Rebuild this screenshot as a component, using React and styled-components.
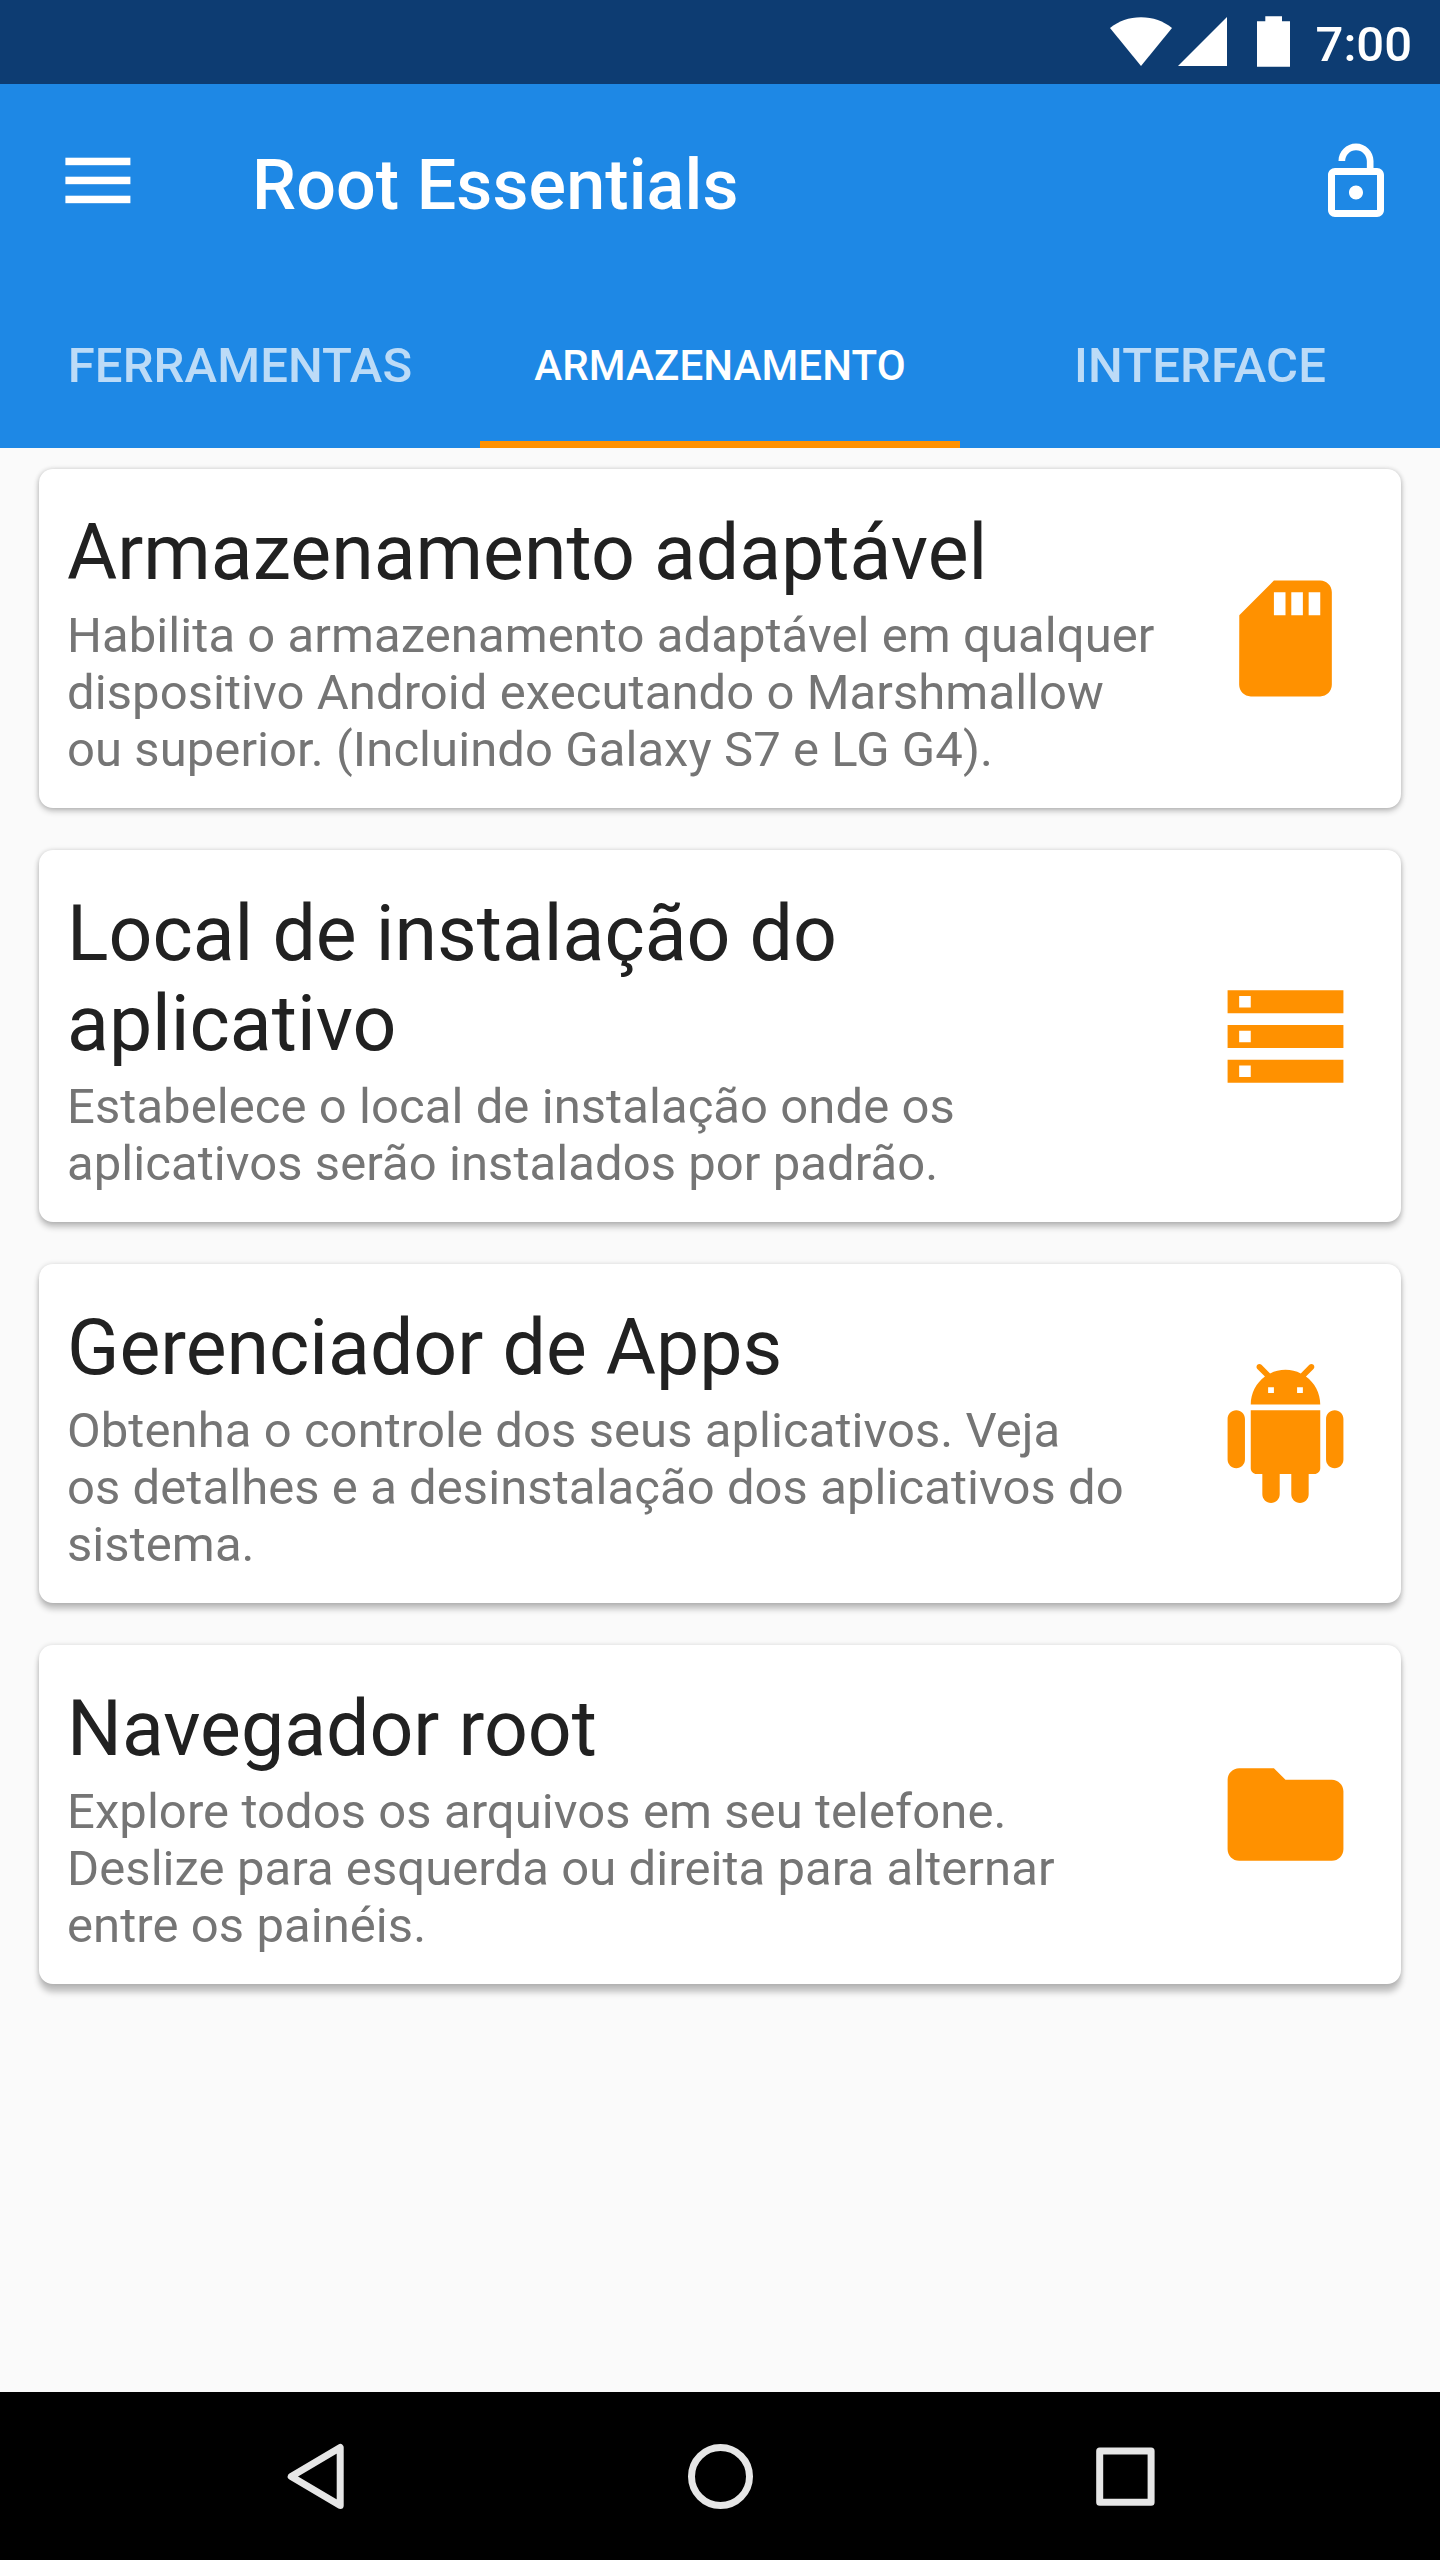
import styled, { createGlobalStyle } from "styled-components";

const cards = [
    {
        title: "Armazenamento adaptável",
        text: "Habilita o armazenamento adaptável em qualquer\ndispositivo Android executando o Marshmallow\nou superior. (Incluindo Galaxy S7 e LG G4).",
        icon: "M18 2h-8L4.02 8 4 20c0 1.1.9 2 2 2h12c1.1 0 2-.9 2-2V4c0-1.1-.9-2-2-2zm-6 6h-2V4h2v4zm3 0h-2V4h2v4zm3 0h-2V4h2v4z",
    },
    {
        title: "Local de instalação do\naplicativo",
        text: "Estabelece o local de instalação onde os\naplicativos serão instalados por padrão.",
        icon: "M2 20h20v-4H2v4zm2-3h2v2H4v-2zM2 4v4h20V4H2zm4 3H4V5h2v2zm-4 7h20v-4H2v4zm2-3h2v2H4v-2z",
    },
    {
        title: "Gerenciador de Apps",
        text: "Obtenha o controle dos seus aplicativos. Veja\nos detalhes e a desinstalação dos aplicativos do\nsistema.",
        icon: "M6 18c0 .55.45 1 1 1h1v3.5c0 .83.67 1.5 1.5 1.5s1.5-.67 1.5-1.5V19h2v3.5c0 .83.67 1.5 1.5 1.5s1.5-.67 1.5-1.5V19h1c.55 0 1-.45 1-1V8H6v10zM3.5 8C2.67 8 2 8.67 2 9.5v7c0 .83.67 1.5 1.5 1.5S5 17.33 5 16.5v-7C5 8.67 4.33 8 3.5 8zm17 0c-.83 0-1.5.67-1.5 1.5v7c0 .83.67 1.5 1.5 1.5s1.5-.67 1.5-1.5v-7c0-.83-.67-1.5-1.5-1.5zm-4.97-5.84l1.3-1.3c.2-.2.2-.51 0-.71-.2-.2-.51-.2-.71 0l-1.48 1.48C13.85 1.23 12.95 1 12 1c-.96 0-1.86.23-2.66.63L7.85.15c-.2-.2-.51-.2-.71 0-.2.2-.2.51 0 .71l1.31 1.31C6.97 3.26 6 5.01 6 7h12c0-1.99-.97-3.75-2.47-4.84zM10 5H9V4h1v1zm5 0h-1V4h1v1z",
    },
    {
        title: "Navegador root",
        text: "Explore todos os arquivos em seu telefone.\nDeslize para esquerda ou direita para alternar\nentre os painéis.",
        icon: "M10 4H4c-1.1 0-1.99.9-1.99 2L2 18c0 1.1.9 2 2 2h16c1.1 0 2-.9 2-2V8c0-1.1-.9-2-2-2h-8l-2-2z",
    },
];

const tabs = ["Ferramentas", "Armazenamento", "Interface"];
const activeTab = "Armazenamento";

const App = () => (
    <Screen>
        <GlobalStyle />
        <StatusBar>
            <svg width="180" height="52" viewBox="0 0 180 52" fill="#fff">
                <path d="M0 12C8.5 5 19 1.2 31 1.2S53.5 5 62 12L31 50z" />
                <path d="M117 1v49H68z" />
                <path d="M155.300 0.200h16.700v5h8v45.600h-33V5.200h8.300z" />
            </svg>
            <Clock>7:00</Clock>
        </StatusBar>

        <Header>
            <Toolbar>
                <svg width="66" height="50" viewBox="0 0 66 50" fill="#fff">
                    <rect x="0.400" y="0.700" width="65" height="7.500" />
                    <rect x="0.400" y="19.700" width="65" height="7.500" />
                    <rect x="0.400" y="38.700" width="65" height="7.500" />
                </svg>
                <AppName>Root Essentials</AppName>
                <svg width="84" height="84" viewBox="0 0 24 24" fill="#fff">
                    <path d="M12 17c1.100 0 2-.9 2-2s-.9-2-2-2-2 .9-2 2 .9 2 2 2zm6-9h-1V6c0-2.760-2.240-5-5-5S7 3.240 7 6h1.900c0-1.710 1.390-3.100 3.100-3.100s3.100 1.390 3.100 3.100v2H6c-1.100 0-2 .9-2 2v10c0 1.100.9 2 2 2h12c1.100 0 2-.9 2-2V10c0-1.100-.9-2-2-2zm0 12H6V10h12v10z" />
                </svg>
            </Toolbar>
            <Tabs>
                {tabs.map((tab) => (
                    <Tab key={tab} $active={tab === activeTab}>
                        {tab}
                    </Tab>
                ))}
            </Tabs>
        </Header>

        <CardList>
            {cards.map(({ title, text, icon }, i) => (
                <Card key={title} $row={i}>
                    <div>
                        <CardTitle>{title}</CardTitle>
                        <CardText>{text}</CardText>
                    </div>
                    <CardIcon viewBox="0 0 24 24">
                        <path d={icon} />
                    </CardIcon>
                </Card>
            ))}
        </CardList>

        <NavBar>
            <NavIcon viewBox="0 0 72 72">
                <path d="M61.200 7.500v58L12.200 36.500z" />
            </NavIcon>
            <NavIcon viewBox="0 0 72 72">
                <circle cx="36.500" cy="36.500" r="29" />
            </NavIcon>
            <NavIcon viewBox="0 0 72 72">
                <rect x="10.700" y="10.900" width="51.400" height="51.400" />
            </NavIcon>
        </NavBar>
    </Screen>
);

const GlobalStyle = createGlobalStyle`
    * {
        box-sizing: border-box;
    }
    body {
        margin: 0;
        font-family: Roboto, sans-serif;
    }
    svg {
        display: block;
        flex-shrink: 0;
    }
    h1, h2, p {
        margin: 0;
    }
`;

const Screen = styled.div`
    width: 1440px;
    height: 2560px;
    display: flex;
    flex-direction: column;
    background: #fafafa;
    overflow: hidden;
`;

const StatusBar = styled.div`
    height: 84px;
    display: flex;
    justify-content: flex-end;
    align-items: center;
    gap: 26px;
    padding-right: 28px;
    background: #0d3c72;
`;

const Clock = styled.span`
    color: #fff;
    font-size: 49px;
    font-weight: 500;
    line-height: 56px;
    padding-top: 5px;
`;

const Header = styled.header`
    background: #1e88e5;
    color: #fff;
`;

const Toolbar = styled.div`
    height: 196px;
    display: flex;
    align-items: center;
    padding: 0 42px 0 65px;
`;

const AppName = styled.h1`
    flex: 1;
    margin-left: 121px;
    padding-top: 6px;
    font-size: 70px;
    font-weight: 500;
    line-height: 82px;
    letter-spacing: 0.1px;
`;

const Tabs = styled.nav`
    height: 168px;
    display: grid;
    grid-template-columns: repeat(3, 1fr);
`;

const Tab = styled.div`
    display: flex;
    align-items: center;
    justify-content: center;
    padding-top: 10px;
    border-bottom: 7px solid ${({ $active }) => ($active ? "#ff9100" : "transparent")};
    color: ${({ $active }) => ($active ? "#fff" : "rgba(255, 255, 255, 0.7)")};
    font-size: ${({ $active }) => ($active ? 42 : 49)}px;
    font-weight: 500;
    letter-spacing: 0.12px;
    text-transform: uppercase;
`;

const CardList = styled.main`
    flex: 1;
    display: flex;
    flex-direction: column;
    gap: 42px;
    padding: 21px 39px 0;
`;

// the shadow drops further the lower the card sits on the screen
const Card = styled.section`
    display: flex;
    align-items: center;
    justify-content: space-between;
    padding: 39px 46px 30px 28px;
    border-radius: 14px;
    background: #fff;
    box-shadow:
        0 ${({ $row }) => 3 + $row * 1.5}px 6px rgba(0, 0, 0, 0.24),
        0 0 5px rgba(0, 0, 0, 0.14);
`;

const CardTitle = styled.h2`
    color: #212121;
    font-size: 77px;
    font-weight: 400;
    line-height: 90px;
    white-space: pre;
`;

const CardText = styled.p`
    margin-top: 9px;
    color: #757575;
    font-size: 49px;
    line-height: 57px;
    letter-spacing: 0.07px;
    white-space: pre;
`;

const CardIcon = styled.svg`
    width: 139px;
    height: 139px;
    margin-top: -9px;
    fill: #ff9100;
`;

const NavBar = styled.footer`
    height: 168px;
    display: flex;
    align-items: center;
    justify-content: center;
    gap: 333px;
    background: #000;
`;

const NavIcon = styled.svg`
    width: 72px;
    height: 72px;
    fill: none;
    stroke: #e6e6e6;
    stroke-width: 7;
    stroke-linejoin: round;
`;

export default App;
